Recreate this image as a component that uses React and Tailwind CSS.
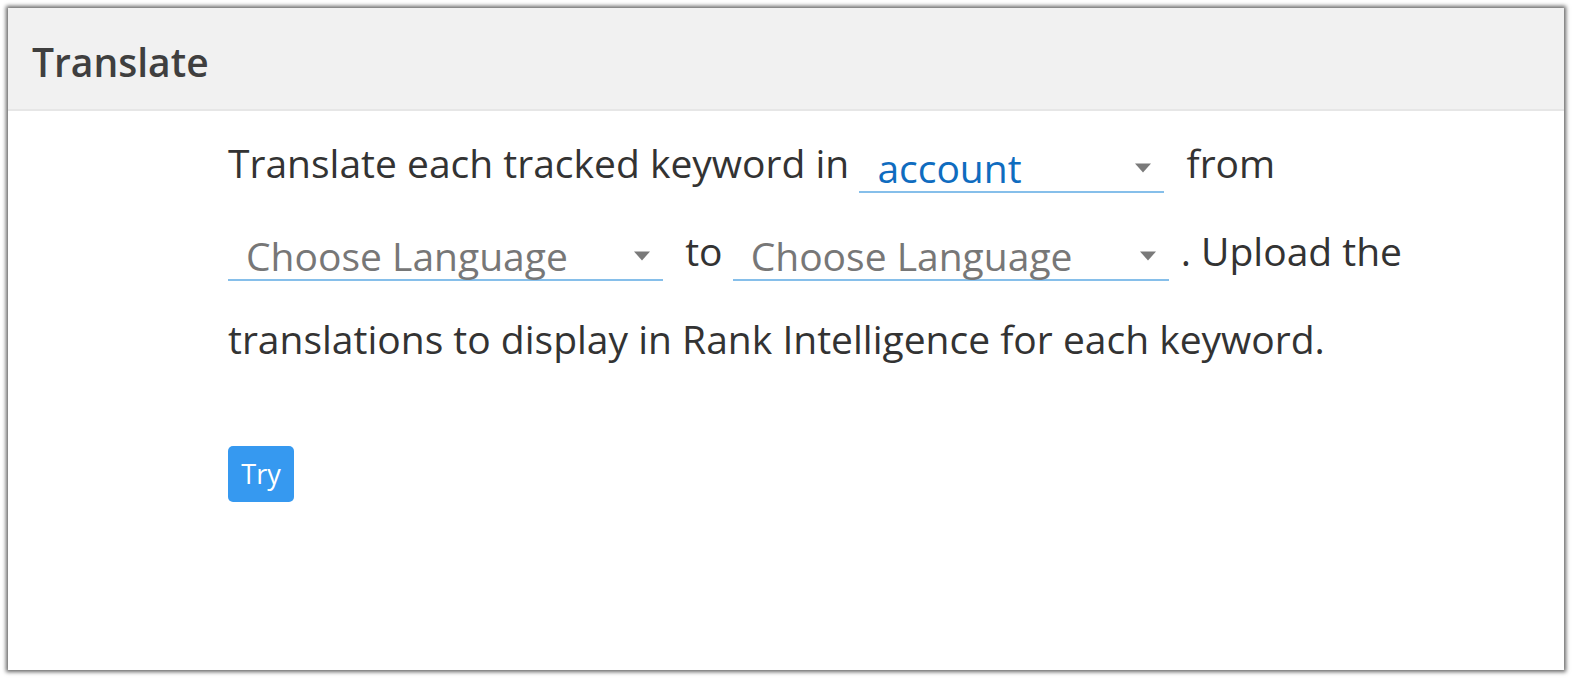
import React from 'react';

function Caret() {
    return (
        <svg width="18" height="10" viewBox="0 0 18 10" className="shrink-0">
            <path d="M1 0.5 L17 0.5 L9 9.5 Z" fill="#7a7a7a" />
        </svg>
    );
}

function LangSelect({ value, placeholder, width }) {
    return (
        <span
            className={`inline-flex items-center justify-between border-b-2 border-[#86bfea] pl-[18px] pr-[12px] mr-[12px] align-[-5px] ${width}`}
        >
            <span className={`text-[39px] leading-[46px] ${value ? 'text-[#0f6cbf]' : 'text-[#777777]'}`}>
                {value || placeholder}
            </span>
            <Caret />
        </span>
    );
}

export default function App() {
    return (
        <div className="min-h-screen bg-white p-[8px] font-['Open_Sans',sans-serif]">
            <div className="h-[662px] bg-white shadow-[0_0_4px_2px_rgba(0,0,0,0.6)] flex flex-col">
                <div className="h-[103px] bg-[#f1f1f1] border-b-2 border-[#e6e6e6] flex items-center px-[24px]">
                    <h1 className="text-[39px] font-semibold text-[#3f3f3f] leading-none pt-[6px]">Translate</h1>
                </div>

                <div className="pl-[220px] pt-[8px]">
                    <p className="w-[1250px] text-[39px] leading-[88px] text-[#333333]">
                        Translate each tracked keyword in{' '}
                        <LangSelect value="account" width="w-[305px]" />
                        {' '}from{' '}
                        <LangSelect placeholder="Choose Language" width="w-[435px]" />
                        {' '}to{' '}
                        <LangSelect placeholder="Choose Language" width="w-[436px]" />
                        . Upload the translations to display in Rank Intelligence for each keyword.
                    </p>

                    <button className="mt-[63px] h-[56px] w-[66px] rounded-[5px] bg-[#3699f0] text-white text-[27px] flex items-center justify-center">
                        Try
                    </button>
                </div>
            </div>
        </div>
    );
}
